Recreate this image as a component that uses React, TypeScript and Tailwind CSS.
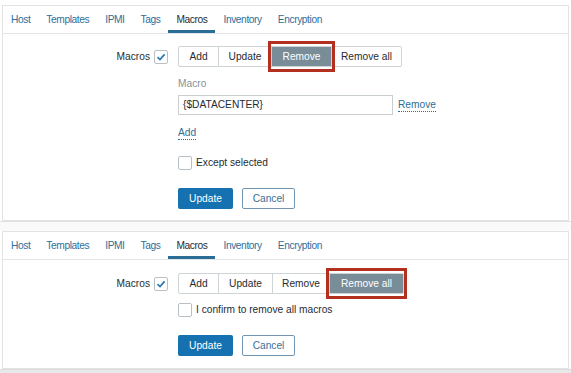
import React from "react";

const tabs = ["Host", "Templates", "IPMI", "Tags", "Macros", "Inventory", "Encryption"];

function Tabs() {
  return (
    <nav className="flex h-[28px] items-stretch border-b border-[#e3e6e8] text-[10.2px] tracking-[-0.4px]">
      {tabs.map((t) => (
        <span
          key={t}
          className={
            t === "Macros"
              ? "flex items-center border-b-[3px] border-[#2b6d95] px-[8px] pt-[3px] text-[#1f2c33]"
              : "flex items-center border-b-[3px] border-transparent px-[8px] pt-[3px] text-[#2f6e99]"
          }
        >
          {t}
        </span>
      ))}
    </nav>
  );
}

function CheckBox({ checked }: { checked?: boolean }) {
  return (
    <span className="flex h-[14px] w-[14px] items-center justify-center rounded-[2px] border border-[#b9c0c5] bg-white">
      {checked && (
        <svg width="10" height="10" viewBox="0 0 10 10">
          <path d="M1.5 5.2 L4 7.6 L8.6 2.4" fill="none" stroke="#2b78b0" strokeWidth="1.7" />
        </svg>
      )}
    </span>
  );
}

type Btn = { label: string; w: number };

function ButtonGroup({ items, active }: { items: Btn[]; active: string }) {
  return (
    <div className="flex h-[21px] rounded-[2px] border border-[#cfd4d7] bg-white">
      {items.map((b, i) => {
        const isActive = b.label === active;
        return (
          <div
            key={b.label}
            style={{ width: b.w }}
            className={
              "relative flex items-center justify-center " +
              (i > 0 ? "border-l border-[#cfd4d7] " : "") +
              (isActive ? "bg-[#788d98] text-white" : "text-[#1f2c33]")
            }
          >
            {b.label}
            {isActive && (
              <span className="pointer-events-none absolute -top-[6px] -bottom-[6px] -left-[4px] -right-[4px] border-[3px] border-[#b32f1f]" />
            )}
          </div>
        );
      })}
    </div>
  );
}

function MacrosRow({ items, active }: { items: Btn[]; active: string }) {
  return (
    <div className="flex items-center">
      <div className="flex w-[165px] items-center justify-end gap-[4px]">
        <span className="text-[#1f2c33]">Macros</span>
        <CheckBox checked />
      </div>
      <div className="ml-[10px]">
        <ButtonGroup items={items} active={active} />
      </div>
    </div>
  );
}

function FormButtons() {
  return (
    <div className="flex gap-[9px]">
      <button className="h-[21px] w-[55px] rounded-[2px] bg-[#1671b0] text-white">Update</button>
      <button className="h-[21px] w-[53px] rounded-[2px] border border-[#7195b3] bg-white text-[#3b6f96]">
        Cancel
      </button>
    </div>
  );
}

export default function App() {
  return (
    <div
      className="flex min-h-[373px] flex-col bg-white pt-[5px] text-[10.2px] leading-[12px]"
      style={{ fontFamily: '"Liberation Sans", Arial, sans-serif' }}
    >
      {/* panel 1: remove */}
      <section className="mx-[2px] border border-[#e3e3e3] bg-white">
        <Tabs />
        <div className="pt-[12px] pb-[11px]">
          <MacrosRow
            items={[
              { label: "Add", w: 39 },
              { label: "Update", w: 53 },
              { label: "Remove", w: 60 },
              { label: "Remove all", w: 70 },
            ]}
            active="Remove"
          />
          <div className="ml-[175px] mt-[11px] flex flex-col items-start">
            <span className="text-[#8a9197]">Macro</span>
            <div className="mt-[5px] flex items-center gap-[5px]">
              <div className="flex h-[20px] w-[215px] items-center border border-[#c9ced1] px-[4px] text-[#1f2c33]">
                {"{$DATACENTER}"}
              </div>
              <span className="border-b border-dotted border-[#2f6e99] text-[#2f6e99]">Remove</span>
            </div>
            <span className="mt-[12px] border-b border-dotted border-[#2f6e99] text-[#2f6e99]">Add</span>
            <label className="mt-[16px] flex items-center gap-[4px] text-[#1f2c33]">
              <CheckBox />
              Except selected
            </label>
            <div className="mt-[18px]">
              <FormButtons />
            </div>
          </div>
        </div>
      </section>

      <div className="h-[10px] border-t border-[#e0e0e0] bg-[#fafafa]" />

      {/* panel 2: remove all */}
      <section className="mx-[2px] border border-[#e3e3e3] bg-white">
        <Tabs />
        <div className="pt-[13px] pb-[12px]">
          <MacrosRow
            items={[
              { label: "Add", w: 39 },
              { label: "Update", w: 54 },
              { label: "Remove", w: 57 },
              { label: "Remove all", w: 74 },
            ]}
            active="Remove all"
          />
          <div className="ml-[175px] flex flex-col items-start">
            <label className="mt-[9px] flex items-center gap-[4px] text-[#1f2c33]">
              <CheckBox />
              I confirm to remove all macros
            </label>
            <div className="mt-[18px]">
              <FormButtons />
            </div>
          </div>
        </div>
      </section>

      <div className="flex-1 border-t border-[#dcdcdc] bg-[#e8e8e8]" />
    </div>
  );
}
